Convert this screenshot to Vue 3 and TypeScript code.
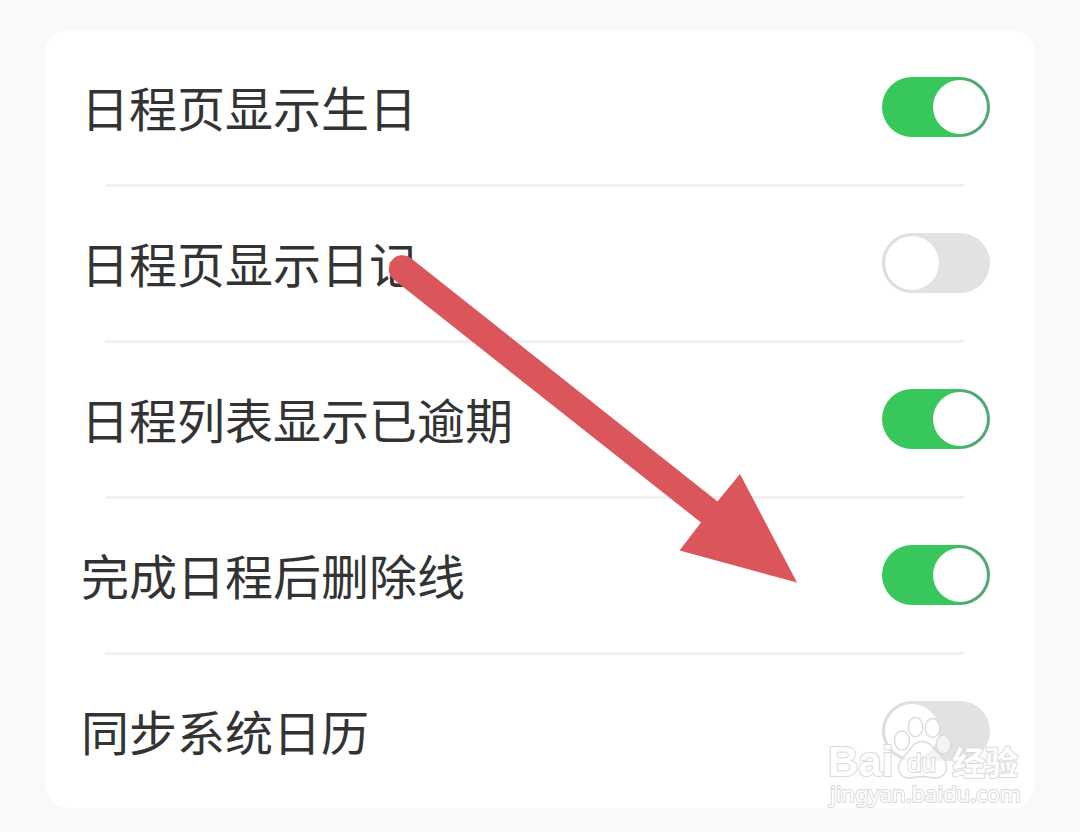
<script setup lang="ts">
import { ref } from 'vue'

interface Setting {
  id: string
  label: string
  on: boolean
}

const settings = ref<Setting[]>([
  { id: 'birthday', label: '日程页显示生日', on: true },
  { id: 'diary', label: '日程页显示日记', on: false },
  { id: 'overdue', label: '日程列表显示已逾期', on: true },
  { id: 'strike', label: '完成日程后删除线', on: true },
  { id: 'sync', label: '同步系统日历', on: false },
])
</script>

<template>
  <main class="page">
    <section class="card">
      <ul class="list">
        <li v-for="item in settings" :key="item.id" class="row">
          <label class="label" :for="item.id">{{ item.label }}</label>
          <input :id="item.id" v-model="item.on" class="switch" type="checkbox" role="switch" />
        </li>
      </ul>

      <svg class="arrow" width="412" height="330" viewBox="387 254 412 330" aria-hidden="true">
        <path d="M411 258.2 L717.5 501.5 L740 474 L797 582.5 L679.5 550.5 L701 522.5 L394 279.8 A13.6 13.6 0 0 1 411 258.2 Z" />
      </svg>

      <svg class="watermark" width="200" height="104" viewBox="825 710 200 104" aria-hidden="true">
        <g class="paw">
          <ellipse cx="902" cy="740.5" rx="7.5" ry="9.7" />
          <ellipse cx="915.5" cy="727" rx="7.2" ry="9.7" />
          <ellipse cx="932.5" cy="728" rx="7.4" ry="9.5" />
          <ellipse cx="943.5" cy="744.5" rx="7.3" ry="9.3" />
          <path d="M922 741.5 C930 741.5 933 748 938 753 C943 758 947 761 946.5 768 C946 775 940 778.5 934 778 C929 777.5 926 776.5 922 776.5 C917 776.5 914 778 909 778 C902 778 898 773 898.5 767 C899 760 904 757 908 752 C912 747 915 741.5 922 741.5 Z" />
        </g>
        <text class="brand" x="828" y="776">Bai</text>
        <text class="du" x="907" y="772">du</text>
        <text class="han" x="952" y="775">经验</text>
        <text class="site" x="830" y="802">jingyan.baidu.com</text>
      </svg>
    </section>
  </main>
</template>

<style>
body {
  background: #f9f9f9;
}
</style>

<style scoped>
.page {
  box-sizing: border-box;
  min-height: 100vh;
  padding: 30px 45px 24px;
  background: #f9f9f9;
  font-family: "Noto Sans CJK SC", sans-serif;
}

.card {
  position: relative;
  border-radius: 24px;
  background: #fff;
}

.list {
  margin: 0;
  padding: 0;
  list-style: none;
}

.row {
  position: relative;
  display: flex;
  align-items: center;
  justify-content: space-between;
  height: 154px;
  padding: 0 45px 0 36px;
}

.row + .row {
  margin-top: 2px;
}

.row + .row::before {
  content: "";
  position: absolute;
  top: -2px;
  left: 60px;
  right: 71px;
  height: 3px;
  background: #f1f1f1;
}

.label {
  padding-bottom: 2px;
  color: #333;
  font-size: 48px;
  line-height: 72px;
  white-space: nowrap;
}

.switch {
  appearance: none;
  flex: none;
  width: 108px;
  height: 60px;
  margin: 0;
  padding: 3px;
  border-radius: 30px;
  background: linear-gradient(to right, #dcdcdc, #e2e2e2 40%);
  cursor: pointer;
}

.switch::before {
  content: "";
  display: block;
  width: 54px;
  height: 54px;
  border-radius: 50%;
  background: #fff;
}

.switch:checked {
  background: linear-gradient(to right, #37c75b 64%, #52a874 80%);
}

.switch:checked::before {
  margin-left: auto;
}

.arrow {
  position: absolute;
  left: 342px;
  top: 224px;
  fill: #db565b;
  pointer-events: none;
}

.watermark {
  position: absolute;
  right: 10px;
  bottom: -6px;
  pointer-events: none;
}

.paw {
  fill: #fff;
  fill-opacity: 0.6;
  stroke: #d9d9d9;
  stroke-width: 1.3;
}

.watermark text {
  fill: #fff;
  stroke: #d9d9d9;
  stroke-width: 2;
  stroke-linejoin: round;
  paint-order: stroke;
}

.brand {
  font: bold 42px "Liberation Sans", sans-serif;
}

.du {
  font: 26px "Liberation Sans", sans-serif;
}

.han {
  font: bold 33px "Noto Sans CJK SC", sans-serif;
}

.site {
  font: 22px "Noto Sans", sans-serif;
}
</style>
